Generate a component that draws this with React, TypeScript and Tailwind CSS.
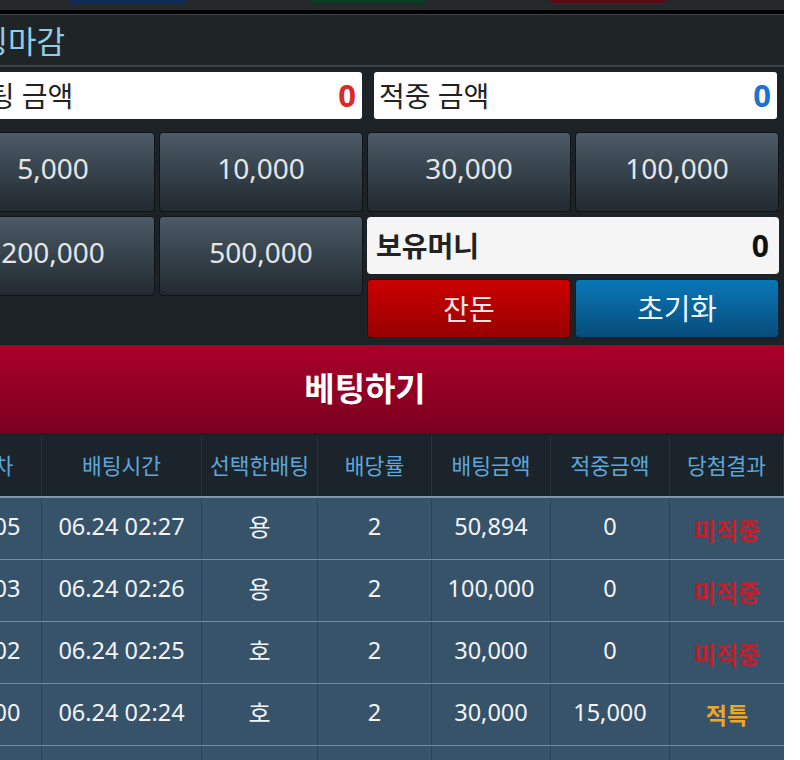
import React from 'react';

const font = { fontFamily: '"Noto Sans", "Noto Sans CJK KR", sans-serif' };

const chips = ['5,000', '10,000', '30,000', '100,000'];

type Row = { round: string; time: string; pick: string; odds: string; bet: string; win: string; result: string };

const rows: Row[] = [
  { round: '1005', time: '06.24 02:27', pick: '용', odds: '2', bet: '50,894', win: '0', result: '미적중' },
  { round: '1003', time: '06.24 02:26', pick: '용', odds: '2', bet: '100,000', win: '0', result: '미적중' },
  { round: '1002', time: '06.24 02:25', pick: '호', odds: '2', bet: '30,000', win: '0', result: '미적중' },
  { round: '1000', time: '06.24 02:24', pick: '호', odds: '2', bet: '30,000', win: '15,000', result: '적특' },
  { round: '', time: '', pick: '', odds: '', bet: '', win: '', result: '' },
];

const colW = ['w-[96px]', 'w-[160px]', 'w-[116px]', 'w-[114px]', 'w-[119px]', 'w-[119px]', 'w-[114px]'];
const headers = ['회차', '배팅시간', '선택한배팅', '배당률', '배팅금액', '적중금액', '당첨결과'];

function ChipButton({ label }: { label: string }) {
  return (
    <button className="h-[80px] rounded-[4px] border border-[#101417] bg-gradient-to-b from-[#4b5b67] to-[#222a30] pb-[8px] text-[28px] text-[#e4e6e8]">
      {label}
    </button>
  );
}

function ResultText({ value }: { value: string }) {
  if (value === '미적중') return <span className="mt-[4px] text-[24px] font-bold text-[#c21f2b]">{value}</span>;
  if (value === '적특') return <span className="mt-[2px] text-[23px] font-bold text-[#e9a82b]">{value}</span>;
  return <span>{value}</span>;
}

export default function App() {
  return (
    <div className="h-[760px] w-[800px] overflow-hidden bg-white" style={font}>
      <div className="h-full w-[784px] overflow-hidden bg-[#1d2226]">
        <div className="-ml-[54px] w-[838px]">
          {/* top tabs peeking out */}
          <div className="flex h-[10px] items-start bg-[#25292c] pl-[124px]">
            <div className="h-[3px] w-[116px] rounded-b-[3px] bg-[#0f2a5c]" />
            <div className="ml-[124px] h-[3px] w-[116px] rounded-b-[3px] bg-[#0b3a25]" />
            <div className="ml-[124px] h-[3px] w-[116px] rounded-b-[3px] bg-[#5c0c18]" />
          </div>
          <div className="h-[4px] bg-black" />

          {/* title */}
          <div className="flex h-[53px] items-center border-t border-[#3c4247] border-b-2 border-b-[#394147] bg-[#1f2427] pl-[5px] pt-[3px]">
            <span className="text-[31px] text-[#92cde4]">배팅마감</span>
          </div>

          {/* bet panel */}
          <div className="px-[5px] pt-[5px] pb-[7px]">
            <div className="grid grid-cols-[411px_403px] gap-[12px]">
              <div className="flex h-[47px] items-center justify-between rounded-[3px] bg-white pl-[12px] pr-[6px]">
                <span className="text-[28px] text-[#222]">배팅 금액</span>
                <span className="text-[31px] font-bold text-[#d92a2a]">0</span>
              </div>
              <div className="flex h-[47px] items-center justify-between rounded-[3px] bg-white pl-[5px] pr-[6px]">
                <span className="text-[28px] text-[#222]">적중 금액</span>
                <span className="text-[31px] font-bold text-[#1b72cf]">0</span>
              </div>
            </div>

            <div className="mt-[13px] grid grid-cols-4 gap-[4px]">
              {chips.map((c) => (
                <ChipButton key={c} label={c} />
              ))}
              <ChipButton label="200,000" />
              <ChipButton label="500,000" />
              <div className="col-span-2 flex flex-col gap-[5px] pt-[1px]">
                <div className="flex h-[57px] items-center justify-between rounded-[4px] bg-[#f5f5f5] pl-[9px] pr-[10px]">
                  <span className="text-[28px] font-bold text-[#222]">보유머니</span>
                  <span className="text-[30px] font-bold text-[#111]">0</span>
                </div>
                <div className="grid grid-cols-2 gap-[4px]">
                  <button className="h-[59px] rounded-[4px] border border-[#3a0b0b] bg-gradient-to-b from-[#cc0000] to-[#980000] text-[28px] text-[#f2e6e6]">
                    잔돈
                  </button>
                  <button className="h-[59px] rounded-[4px] border border-[#0b2438] bg-gradient-to-b from-[#0a77b7] to-[#074d7c] text-[29px] text-[#eef4f8]">
                    초기화
                  </button>
                </div>
              </div>
            </div>
          </div>

          {/* bet button */}
          <button className="flex h-[88px] w-full items-center justify-center bg-gradient-to-b from-[#ab002a] to-[#7a001f] text-[33px] font-bold text-white">
            베팅하기
          </button>
          <div className="h-[3px] bg-[#1b2329]" />

          {/* history table */}
          <div className="bg-[#37536a]">
            <div className="flex h-[62px] border-b-2 border-[#7f97a8] bg-[#1b242b]">
              {headers.map((h, i) => (
                <div
                  key={h}
                  className={`${colW[i]} flex items-center justify-center border-r border-[#27313a] text-[21.5px] text-[#5ca7dc]`}
                >
                  {h}
                </div>
              ))}
            </div>
            {rows.map((r, idx) => {
              const cells = [r.round, r.time, r.pick, r.odds, r.bet, r.win];
              return (
                <div key={idx} className="flex h-[62px] border-b-[1.5px] border-[#6f8ea6]">
                  {cells.map((c, i) => (
                    <div
                      key={i}
                      className={`${colW[i]} flex items-center justify-center border-r border-[#2b4357] pb-[4px] ${i === 2 ? 'text-[24px]' : 'text-[23.5px]'} text-[#f2f4f6]`}
                    >
                      {c}
                    </div>
                  ))}
                  <div className={`${colW[6]} flex items-center justify-center`}>
                    <ResultText value={r.result} />
                  </div>
                </div>
              );
            })}
          </div>
        </div>
      </div>
    </div>
  );
}
